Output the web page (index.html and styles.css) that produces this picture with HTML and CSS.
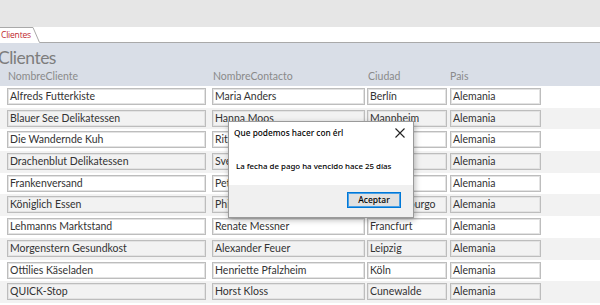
FILE: index.html
```html
<!DOCTYPE html>
<html lang="es">
<head>
<meta charset="utf-8">
<title>Clientes</title>
<link rel="stylesheet" href="styles.css">
</head>
<body>
<div class="app">
  <div class="ribbon"></div>
  <div class="tabstrip">
    <div class="tab">
      <svg class="tab-shape" width="41" height="16" viewBox="0 0 41 16"><path d="M0 0.5 H33 L39.5 15.5 H41" stroke="#a9a9a9" stroke-width="1" fill="#ffffff"/></svg>
      <span class="tab-label">Clientes</span>
    </div>
    <div class="tabline"></div>
  </div>
  <div class="form-header">
    <div class="form-title">Clientes</div>
    <div class="labels">
      <span class="c1">NombreCliente</span>
      <span class="c2">NombreContacto</span>
      <span class="c3">Ciudad</span>
      <span class="c4">Pais</span>
    </div>
  </div>
  <div class="rows">
    <div class="row"><span class="f c1">Alfreds Futterkiste</span><span class="f c2">Maria Anders</span><span class="f c3">Berlín</span><span class="f c4">Alemania</span></div>
    <div class="row alt"><span class="f c1">Blauer See Delikatessen</span><span class="f c2">Hanna Moos</span><span class="f c3">Mannheim</span><span class="f c4">Alemania</span></div>
    <div class="row"><span class="f c1">Die Wandernde Kuh</span><span class="f c2">Rita Müller</span><span class="f c3">Stuttgart</span><span class="f c4">Alemania</span></div>
    <div class="row alt"><span class="f c1">Drachenblut Delikatessen</span><span class="f c2">Sven Ottlieb</span><span class="f c3">Aachen</span><span class="f c4">Alemania</span></div>
    <div class="row"><span class="f c1">Frankenversand</span><span class="f c2">Peter Franken</span><span class="f c3">München</span><span class="f c4">Alemania</span></div>
    <div class="row alt"><span class="f c1">Königlich Essen</span><span class="f c2">Philip Cramer</span><span class="f c3">Brandenburgo</span><span class="f c4">Alemania</span></div>
    <div class="row"><span class="f c1">Lehmanns Marktstand</span><span class="f c2">Renate Messner</span><span class="f c3">Francfurt</span><span class="f c4">Alemania</span></div>
    <div class="row alt"><span class="f c1">Morgenstern Gesundkost</span><span class="f c2">Alexander Feuer</span><span class="f c3">Leipzig</span><span class="f c4">Alemania</span></div>
    <div class="row"><span class="f c1">Ottilies Käseladen</span><span class="f c2">Henriette Pfalzheim</span><span class="f c3">Köln</span><span class="f c4">Alemania</span></div>
    <div class="row alt"><span class="f c1">QUICK-Stop</span><span class="f c2">Horst Kloss</span><span class="f c3">Cunewalde</span><span class="f c4">Alemania</span></div>
    <div class="row"><span class="f c1"></span><span class="f c2"></span><span class="f c3"></span><span class="f c4"></span></div>
  </div>

  <div class="dialog">
    <div class="dlg-title">
      <span>Que podemos hacer con érl</span>
      <svg class="dlg-close" width="10" height="10" viewBox="0 0 10 10"><path d="M0.5 0.5 L9.5 9.5 M9.5 0.5 L0.5 9.5" stroke="#222" stroke-width="1.1" fill="none"/></svg>
    </div>
    <div class="dlg-body">La fecha de pago ha vencido hace 25 días</div>
    <div class="dlg-foot"><span class="btn">Aceptar</span></div>
  </div>
</div>
</body>
</html>
```
FILE: styles.css
```css
* { box-sizing: border-box; }
html, body { margin: 0; padding: 0; }
body {
  width: 600px;
  height: 305px;
  overflow: hidden;
  background: #ffffff;
  font-family: Lato, "Open Sans", sans-serif;
}
.app { position: relative; width: 600px; height: 305px; overflow: hidden; }

.ribbon { height: 27px; background: #e6e6e6; }

.tabstrip {
  height: 16px;
  display: flex;
  align-items: stretch;
  background: #ffffff;
}
.tab {
  position: relative;
  width: 41px;
  flex: none;
}
.tab-shape { position: absolute; left: 0; top: 0; }
.tab-label {
  position: relative;
  display: block;
  font-family: "Open Sans", Lato, sans-serif;
  font-size: 8.5px;
  color: #c0282d;
  padding: 3px 0 0 1px;
  line-height: 10px;
  letter-spacing: -0.2px;
}
.tabline { flex: 1; border-bottom: 1px solid #a9a9a9; }

.form-header {
  height: 43px;
  background: #d9dee7;
}
.form-title {
  font-family: Lato, "Open Sans", sans-serif;
  font-size: 17.5px;
  letter-spacing: -0.5px;
  color: #7d7d7d;
  line-height: 22px;
  padding: 4px 0 0 0;
  margin-left: -2px;
  height: 25px;
}
.labels {
  display: flex;
  font-size: 10.5px;
  color: #8a8a8a;
  line-height: 14px;
  padding-top: 1px;
}
.labels .c1 { margin-left: 8px; width: 205px; }
.labels .c2 { width: 155px; }
.labels .c3 { width: 82px; }

.rows { display: flex; flex-direction: column; }
.row {
  height: 21.7px;
  display: flex;
  align-items: flex-start;
  padding-top: 2px;
  background: #ffffff;
}
.row.alt { background: #f2f2f2; }

.f {
  height: 17px;
  border: 1px solid #bdbdbd;
  box-shadow: inset 0 0 0 1px #e3e3e3;
  font-size: 10.5px;
  line-height: 15px;
  color: #333333;
  padding-left: 2px;
  white-space: nowrap;
  overflow: hidden;
}
.f.c1 { margin-left: 7px; width: 199px; }
.f.c2 { margin-left: 6px; width: 153px; }
.f.c3 { margin-left: 2px; width: 80px; }
.f.c4 { margin-left: 3px; width: 91px; }

.dialog {
  position: absolute;
  left: 228px;
  top: 121px;
  width: 186px;
  height: 97px;
  background: #ffffff;
  border: 1px solid #9a9a9a;
  box-shadow: 1px 2px 6px rgba(0,0,0,0.28);
  display: flex;
  flex-direction: column;
  font-family: "Noto Sans", "Open Sans", sans-serif;
  color: #000000;
}
.dlg-title {
  height: 21px;
  display: flex;
  align-items: center;
  justify-content: space-between;
  padding: 0 8px 0 5px;
  font-size: 8.3px;
  font-weight: 500;
}
.dlg-close { display: block; }
.dlg-body {
  flex: 1;
  font-size: 7.9px;
  font-weight: 500;
  padding: 18px 0 0 7px;
}
.dlg-foot {
  height: 32px;
  background: #f0f0f0;
  display: flex;
  justify-content: flex-end;
  align-items: flex-start;
  padding: 7px 12px 0 0;
}
.btn {
  width: 54px;
  height: 16px;
  border: 1px solid #0078d7;
  box-shadow: inset 0 0 0 1px #4aa0e6;
  background: #e1e1e1;
  font-size: 8.5px;
  font-weight: 500;
  line-height: 14px;
  text-align: center;
  color: #000;
}
```
